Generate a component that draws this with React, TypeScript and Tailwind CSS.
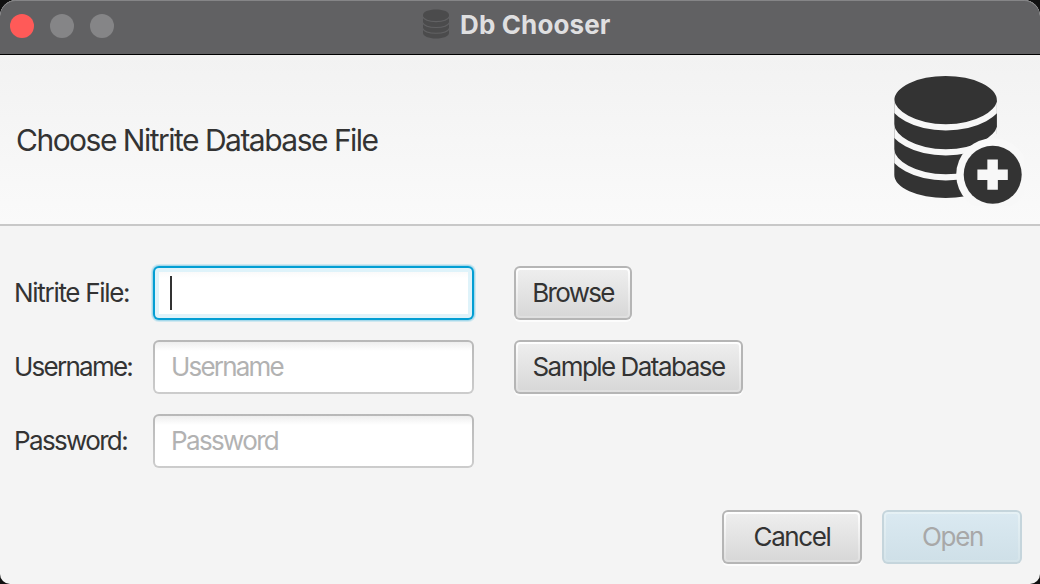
import type { ReactNode } from "react";

function DbIcon() {
  return (
    <svg width="28" height="31" viewBox="0 0 28 31" fill="none">
      <path d="M1 6C1 3 6.500 .6 14 .6S27 3 27 6v18c0 3-5.500 5.500-13 5.500S1 27 1 24Z" fill="#4b4b4c" />
      <path
        d="M.5 7.500C2 11 7 12.600 14 12.600S26 11 27.500 7.500M.5 13.500C2 17 7 18.500 14 18.500S26 17 27.500 13.500M.5 19.200C2 22.700 7 24.200 14 24.200S26 22.700 27.500 19.200"
        stroke="#616163"
        strokeWidth="1.100"
      />
    </svg>
  );
}

function DbAddIcon() {
  return (
    <svg width="132" height="132" viewBox="892 74 132 132" fill="none" className="block">
      <defs>
        <clipPath id="drum">
          <path d="M894.300 100.500a51.300 24.500 0 0 1 102.600 0V134H994V160H997V175a51.300 23 0 0 1-102.700 0Z" />
        </clipPath>
      </defs>
      <g clipPath="url(#drum)">
        <rect x="892" y="74" width="108" height="126" fill="#333" />
        <path
          d="M890.800 97.300a55 30 0 0 0 110 0M890.800 122.300a55 30 0 0 0 110 0M890.800 147.300a55 30 0 0 0 110 0"
          stroke="#f7f7f7"
          strokeWidth="6.200"
        />
      </g>
      <circle cx="992.700" cy="174.700" r="36.500" fill="#f8f8f8" />
      <circle cx="992.700" cy="174.700" r="29" fill="#333" />
      <path d="M977.400 174.700h30.400M992.600 159.400v30.400" stroke="#f8f8f8" strokeWidth="10.500" />
    </svg>
  );
}

function Button({ children, className }: { children: ReactNode; className: string }) {
  return (
    <button
      className={`h-[54px] rounded-[6px] bg-[#b5b5b5] p-[2px] text-[#333] shadow-[0_2px_0_#fcfcfc] ${className}`}
    >
      <span className="block h-full rounded-[4px] bg-linear-to-b from-white to-[#dfdfdf] p-[2px]">
        <span className="flex h-full items-center justify-center rounded-[2px] bg-linear-to-b from-[#eeeeee] to-[#d8d8d8]">
          {children}
        </span>
      </span>
    </button>
  );
}

function Field({ placeholder, className }: { placeholder: string; className: string }) {
  return (
    <div className="h-[54px] rounded-[6px] bg-linear-to-b from-[#b8b8b8] to-[#cccccc] p-[2px]">
      <div className="flex h-full items-center rounded-[4px] bg-linear-to-b from-[#eeeeee] to-white to-[9px] pl-4 text-[#b2b2b2]">
        <span className={className}>{placeholder}</span>
      </div>
    </div>
  );
}

export default function App() {
  return (
    <div className="h-[584px] w-[1040px] bg-[#111]">
      <div className="flex h-full flex-col overflow-hidden rounded-t-[16px] rounded-b-[10px] bg-[#f4f4f4] font-['Inter','Liberation_Sans',sans-serif] text-[26px] leading-[32px] text-[#333]">
        <header className="flex h-[55px] shrink-0 items-start rounded-t-[16px] border-b border-black bg-[#616163] shadow-[inset_0_1px_0_#858587]">
          <div className="flex w-[422px] gap-4 pt-[14px] pl-[10px]">
            <span className="size-6 rounded-full bg-[#ff5a58]" />
            <span className="size-6 rounded-full bg-[#858587]" />
            <span className="size-6 rounded-full bg-[#858587]" />
          </div>
          <div className="flex items-start gap-[10px] pt-[9px]">
            <DbIcon />
            <h1 className="font-bold tracking-[0.13px] text-[#dfdfe0]">Db Chooser</h1>
          </div>
        </header>
        <section className="flex h-[171px] shrink-0 items-center justify-between border-b-2 border-[#c8c8c8] bg-linear-to-b from-[#f2f2f2] to-[#fafafa] pr-4 pl-4">
          <h2 className="text-[30px] leading-9 -tracking-[1.51px]">Choose Nitrite Database File</h2>
          <DbAddIcon />
        </section>
        <main className="grid grid-cols-[139px_321px_auto] items-center justify-start gap-y-5 pt-10 pl-[14px]">
          <label className="-tracking-[1.3px]">Nitrite File:</label>
          <div className="h-[54px] rounded-[6px] bg-[#039ed3] p-[2px] shadow-[0_0_0_1px_#a5d8ea,0_0_0_2px_#cfe8f0]">
            <div className="h-full rounded-[4px] bg-[#dff3fa] p-1">
              <div className="h-full bg-linear-to-b from-[#fafafa] to-white to-[6px] pt-1 pl-[11px]">
                <div className="h-[34px] w-[2px] bg-[#333]" />
              </div>
            </div>
          </div>
          <div className="pl-10">
            <Button className="w-[118px] -tracking-[1.7px]">Browse</Button>
          </div>
          <label className="-tracking-[1.75px]">Username:</label>
          <Field placeholder="Username" className="-tracking-[1.8px]" />
          <div className="pl-10">
            <Button className="w-[229px] -tracking-[1.52px]">Sample Database</Button>
          </div>
          <label className="-tracking-[1.65px]">Password:</label>
          <Field placeholder="Password" className="-tracking-[1.65px]" />
        </main>
        <footer className="mt-auto flex justify-end gap-5 pr-[18px] pb-5">
          <Button className="w-[140px] -tracking-[1.4px]">Cancel</Button>
          <button
            disabled
            className="h-[54px] w-[140px] rounded-[6px] bg-[#c5d5dc] p-[2px] -tracking-[1.35px] text-[#a8a8a8]"
          >
            <span className="block h-full rounded-[4px] bg-linear-to-b from-[#e6f1f5] to-[#d5e4ea] p-[2px]">
              <span className="flex h-full items-center justify-center rounded-[2px] bg-linear-to-b from-[#dae9f1] to-[#cfe0e8] pl-px">
                Open
              </span>
            </span>
          </button>
        </footer>
      </div>
    </div>
  );
}
